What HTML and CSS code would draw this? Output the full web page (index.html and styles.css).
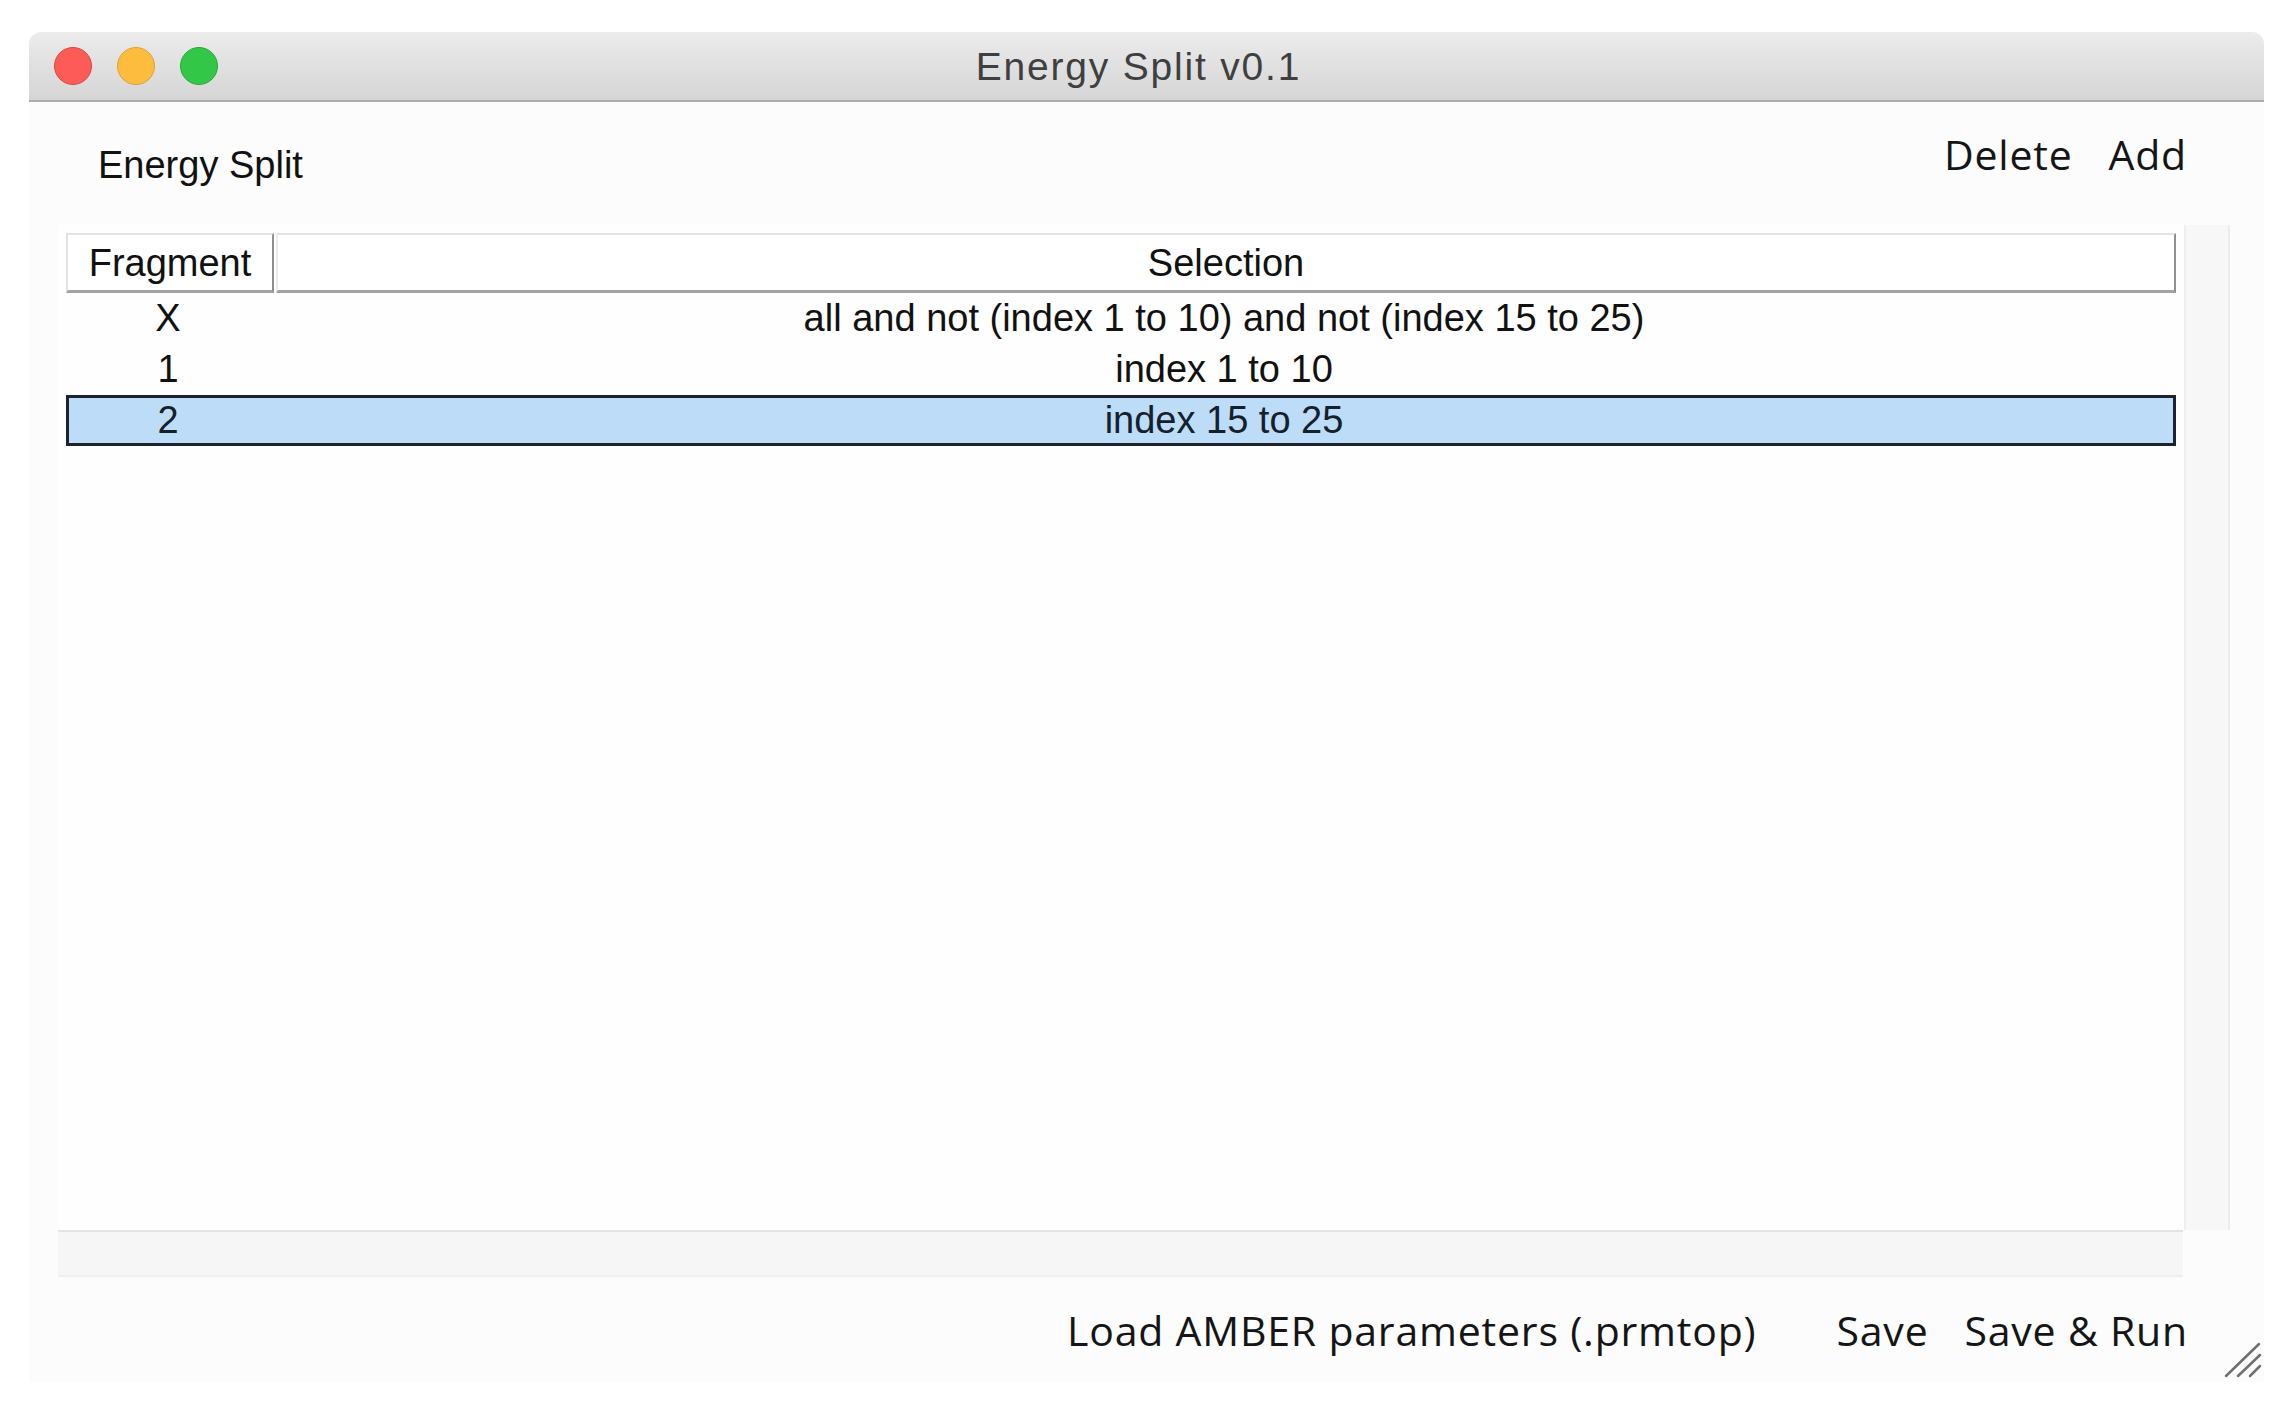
FILE: index.html
```html
<!DOCTYPE html>
<html>
<head>
<meta charset="utf-8">
<title>Energy Split v0.1</title>
<link rel="stylesheet" href="styles.css">
</head>
<body>
<div class="window">
  <div class="titlebar">
    <div class="lights">
      <span class="light red"></span>
      <span class="light yellow"></span>
      <span class="light green"></span>
    </div>
    <div class="title">Energy Split v0.1</div>
  </div>
  <div class="content">
    <div class="toprow">
      <div class="label">Energy Split</div>
      <div class="actions">
        <span class="btn">Delete</span>
        <span class="btn">Add</span>
      </div>
    </div>
    <div class="pane">
      <div class="viewport">
        <div class="table">
          <div class="th th-frag">Fragment</div>
          <div class="th th-sel">Selection</div>
          <div class="row">
            <div class="td">X</div>
            <div class="td td-sel">all and not (index 1 to 10) and not (index 15 to 25)</div>
          </div>
          <div class="row">
            <div class="td">1</div>
            <div class="td td-sel">index 1 to 10</div>
          </div>
          <div class="row selected">
            <div class="td">2</div>
            <div class="td td-sel">index 15 to 25</div>
          </div>
        </div>
      </div>
      <div class="vscroll"></div>
    </div>
    <div class="hscroll"></div>
    <div class="bottomrow">
      <span class="btn">Load AMBER parameters (.prmtop)</span>
      <span class="btn save">Save</span>
      <span class="btn">Save &amp; Run</span>
    </div>
  </div>
  <svg class="grip" width="38" height="36" viewBox="0 0 38 36">
    <line x1="2" y1="34" x2="35" y2="2" stroke="#6f6f6f" stroke-width="2.5" stroke-linecap="round"/>
    <line x1="14" y1="34" x2="36" y2="13" stroke="#6f6f6f" stroke-width="2.5" stroke-linecap="round"/>
    <line x1="26" y1="34" x2="36" y2="24" stroke="#6f6f6f" stroke-width="2.5" stroke-linecap="round"/>
  </svg>
</div>
</body>
</html>
```

FILE: styles.css
```css
html, body {
  margin: 0;
  padding: 0;
  background: #ffffff;
}

body {
  width: 2290px;
  height: 1414px;
  overflow: hidden;
  font-family: "Liberation Sans", Arial, sans-serif;
}

.window {
  position: relative;
  margin-left: 29px;
  margin-top: 32px;
  width: 2235px;
  height: 1350px;
  background: #fcfcfc;
  border-radius: 12px 12px 0 0;
  display: flex;
  flex-direction: column;
}

.titlebar {
  height: 68px;
  border-bottom: 2px solid #adadad;
  border-radius: 12px 12px 0 0;
  background: linear-gradient(#ececec, #d5d5d5);
  display: flex;
  align-items: center;
  position: relative;
  flex: none;
}

.lights {
  display: flex;
  gap: 25px;
  margin-left: 25px;
  position: relative;
  z-index: 1;
}

.light {
  width: 36px;
  height: 36px;
  border-radius: 50%;
  border: 1px solid;
}

.red { background: #fc5b57; border-color: #e0443e; }
.yellow { background: #fdbc3e; border-color: #dea236; }
.green { background: #33c748; border-color: #27a935; }

.title {
  position: absolute;
  left: 0;
  right: 0;
  top: 0;
  bottom: 0;
  display: flex;
  align-items: center;
  justify-content: center;
  font-family: "Liberation Sans", Arial, sans-serif;
  font-size: 39px;
  letter-spacing: 1.8px;
  color: #3f3f3f;
  padding-right: 16px;
  padding-top: 2px;
}

.content {
  flex: 1;
  display: flex;
  flex-direction: column;
}

.toprow {
  height: 123px;
  display: flex;
  justify-content: space-between;
  align-items: flex-start;
  padding-left: 69px;
  padding-right: 77px;
  flex: none;
}

.label {
  margin-top: 41px;
  font-size: 38px;
  line-height: 44px;
  color: #111111;
}

.actions {
  margin-top: 24px;
  display: flex;
  gap: 36px;
}

.btn {
  font-family: "Open Sans", "DejaVu Sans", sans-serif;
  font-size: 41px;
  letter-spacing: 0.8px;
  color: #151515;
  white-space: nowrap;
}

.pane {
  margin-left: 29px;
  width: 2172px;
  height: 1005px;
  display: flex;
  flex: none;
}

.viewport {
  width: 2126px;
  padding: 8px 8px 0 8px;
  box-sizing: border-box;
  background: #fefefe;
}

.vscroll {
  flex: 1;
  background: #f7f7f7;
  border-left: 2px solid #eeeeee;
  border-right: 2px solid #ececec;
}

.table {
  display: grid;
  grid-template-columns: 208px 1fr;
  font-family: "Liberation Sans", Arial, sans-serif;
  font-size: 38px;
  color: #111111;
}

.th {
  height: 54px;
  background: #ffffff;
  border-top: 2px solid #e3e3e3;
  border-bottom: 3px solid #a3a3a3;
  display: flex;
  align-items: center;
  justify-content: center;
  box-sizing: content-box;
  padding-top: 1px;
}

.th-frag {
  border-left: 2px solid #e2e2e2;
  border-right: 2px solid #8f8f8f;
}

.th-sel {
  border-left: 2px solid #ececec;
  border-right: 2px solid #8f8f8f;
  margin-left: 2px;
}

.row {
  grid-column: 1 / 3;
  display: grid;
  grid-template-columns: 198px 1fr;
  height: 51px;
  box-sizing: border-box;
  border: 3px solid transparent;
}

.td {
  display: flex;
  align-items: center;
  justify-content: center;
  white-space: nowrap;
}

.td-sel {
  padding-left: 8px;
}

.row.selected {
  background: #bddcf8;
  border-color: #1c2230;
  color: #14202c;
}

.hscroll {
  margin-left: 29px;
  width: 2125px;
  height: 47px;
  box-sizing: border-box;
  background: #f6f6f6;
  border-top: 2px solid #e4e4e4;
  border-bottom: 2px solid #eeeeee;
  flex: none;
}

.bottomrow {
  margin-top: 25px;
  display: flex;
  justify-content: flex-end;
  padding-right: 76px;
  gap: 36px;
}

.bottomrow .save {
  margin-left: 44px;
}

.grip {
  position: absolute;
  right: 2px;
  bottom: 4px;
}
```
